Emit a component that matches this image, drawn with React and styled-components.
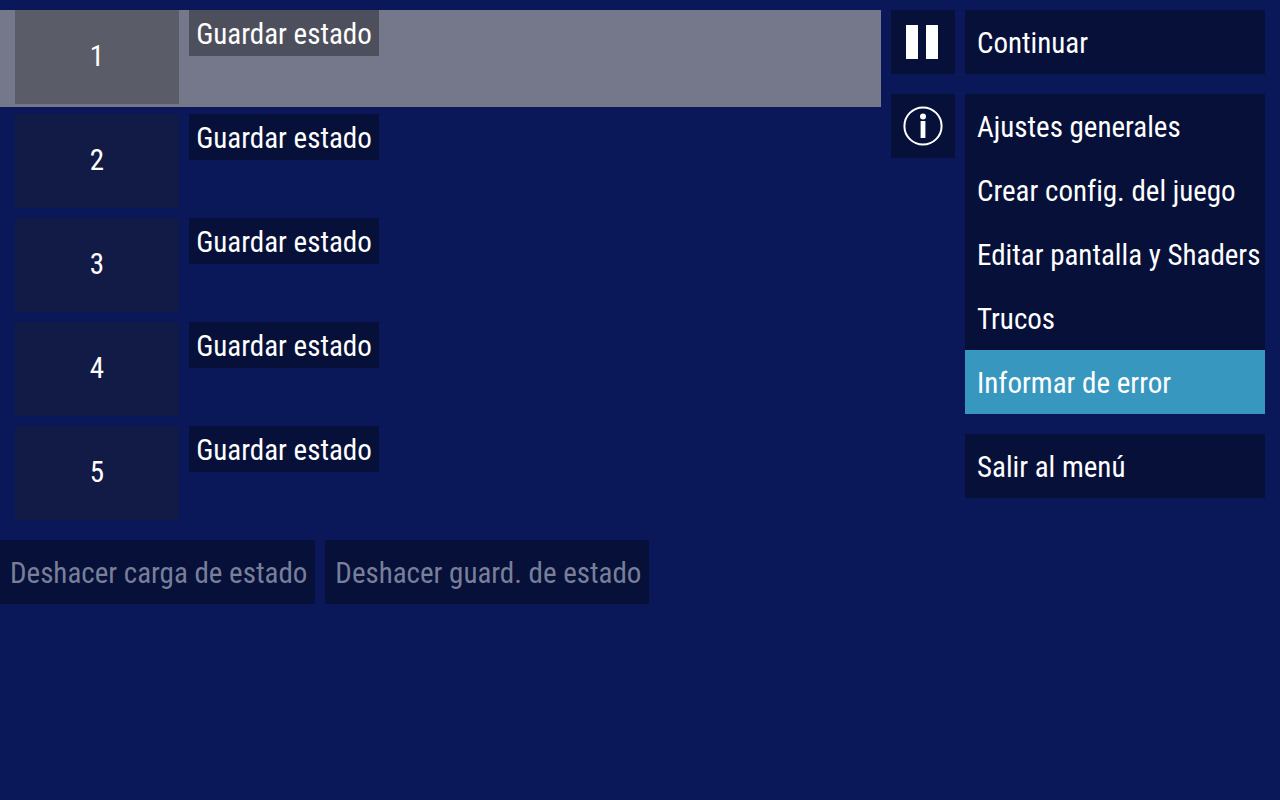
import React from "react";
import styled, { createGlobalStyle } from "styled-components";

const GlobalStyle = createGlobalStyle`
  *, *::before, *::after { box-sizing: border-box; }
  body {
    margin: 0;
    min-height: 100vh;
    background: #0a1758;
    color: #fff;
    font-family: "Roboto Condensed", "Liberation Sans Narrow", Roboto, sans-serif;
    font-size: 29px;
    line-height: 36px;
  }
  button {
    margin: 0;
    border: 0;
    font: inherit;
    font-variant-ligatures: none;
    color: inherit;
    white-space: nowrap;
    cursor: pointer;
  }
`;

const Screen = styled.main`
  display: flex;
  align-items: flex-start;
  gap: 10px;
  padding: 10px 15px 10px 0;
`;

const States = styled.section`
  flex: 1;
  min-width: 0;
`;

const SlotList = styled.ol`
  display: flex;
  flex-direction: column;
  gap: 7px;
  margin: 0;
  padding: 0;
  list-style: none;
`;

const Slot = styled.li`
  display: flex;
  align-items: flex-start;
  gap: 10px;
  padding: 0 15px 3px;
  background: ${(p) => (p.$selected ? "#74788a" : "transparent")};
`;

const Thumbnail = styled.button`
  width: 164px;
  height: 94px;
  padding: 0 0 2px;
  background: ${(p) => (p.$selected ? "#5a5c68" : "#121b45")};
`;

const SaveButton = styled.button`
  width: 190px;
  height: 46px;
  padding: 2px 0 0;
  background: ${(p) => (p.$selected ? "#4d505c" : "#061039")};
`;

const UndoBar = styled.div`
  display: flex;
  gap: 10px;
  margin-top: 17px;
`;

const UndoButton = styled.button`
  height: 64px;
  padding: 2px 8px 0 10px;
  background: #061039;

  &:disabled {
    color: #797f99;
    cursor: default;
  }
`;

const Tools = styled.div`
  display: flex;
  flex-direction: column;
  gap: 20px;
`;

const ToolButton = styled.button`
  display: flex;
  width: 64px;
  height: 64px;
  padding: 0;
  background: #061039;
`;

const Menu = styled.nav`
  display: flex;
  flex-direction: column;
  gap: 20px;
  width: 300px;
`;

const MenuGroup = styled.div`
  display: flex;
  flex-direction: column;
`;

const MenuItem = styled.button`
  height: 64px;
  padding: 2px 0 0 12px;
  text-align: left;
  background: ${(p) => (p.$selected ? "#3897bf" : "#061039")};
`;

const slots = [1, 2, 3, 4, 5];
const selectedSlot = 1;

const menuGroups = [
  ["Continuar"],
  [
    "Ajustes generales",
    "Crear config. del juego",
    "Editar pantalla y Shaders",
    "Trucos",
    "Informar de error",
  ],
  ["Salir al menú"],
];
const selectedItem = "Informar de error";

function PauseIcon() {
  return (
    <svg width="64" height="64" viewBox="0 0 64 64" fill="#fff" aria-hidden="true">
      <rect x="15" y="15" width="12" height="34" />
      <rect x="35" y="15" width="12" height="34" />
    </svg>
  );
}

function InfoIcon() {
  return (
    <svg width="64" height="64" viewBox="0 0 64 64" fill="#fff" aria-hidden="true">
      <circle cx="32" cy="32" r="18.6" fill="none" stroke="#fff" strokeWidth="2" />
      <circle cx="32" cy="22.4" r="3" />
      <rect x="29.6" y="27" width="4.8" height="17" />
    </svg>
  );
}

export default function App() {
  return (
    <>
      <GlobalStyle />
      <Screen>
        <States>
          <SlotList>
            {slots.map((n) => (
              <Slot key={n} $selected={n === selectedSlot}>
                <Thumbnail type="button" $selected={n === selectedSlot}>
                  {n}
                </Thumbnail>
                <SaveButton type="button" $selected={n === selectedSlot}>
                  Guardar estado
                </SaveButton>
              </Slot>
            ))}
          </SlotList>
          <UndoBar>
            <UndoButton type="button" disabled>
              Deshacer carga de estado
            </UndoButton>
            <UndoButton type="button" disabled>
              Deshacer guard. de estado
            </UndoButton>
          </UndoBar>
        </States>
        <Tools>
          <ToolButton type="button" aria-label="Pausa">
            <PauseIcon />
          </ToolButton>
          <ToolButton type="button" aria-label="Información">
            <InfoIcon />
          </ToolButton>
        </Tools>
        <Menu>
          {menuGroups.map((items) => (
            <MenuGroup key={items[0]}>
              {items.map((label) => (
                <MenuItem type="button" key={label} $selected={label === selectedItem}>
                  {label}
                </MenuItem>
              ))}
            </MenuGroup>
          ))}
        </Menu>
      </Screen>
    </>
  );
}
